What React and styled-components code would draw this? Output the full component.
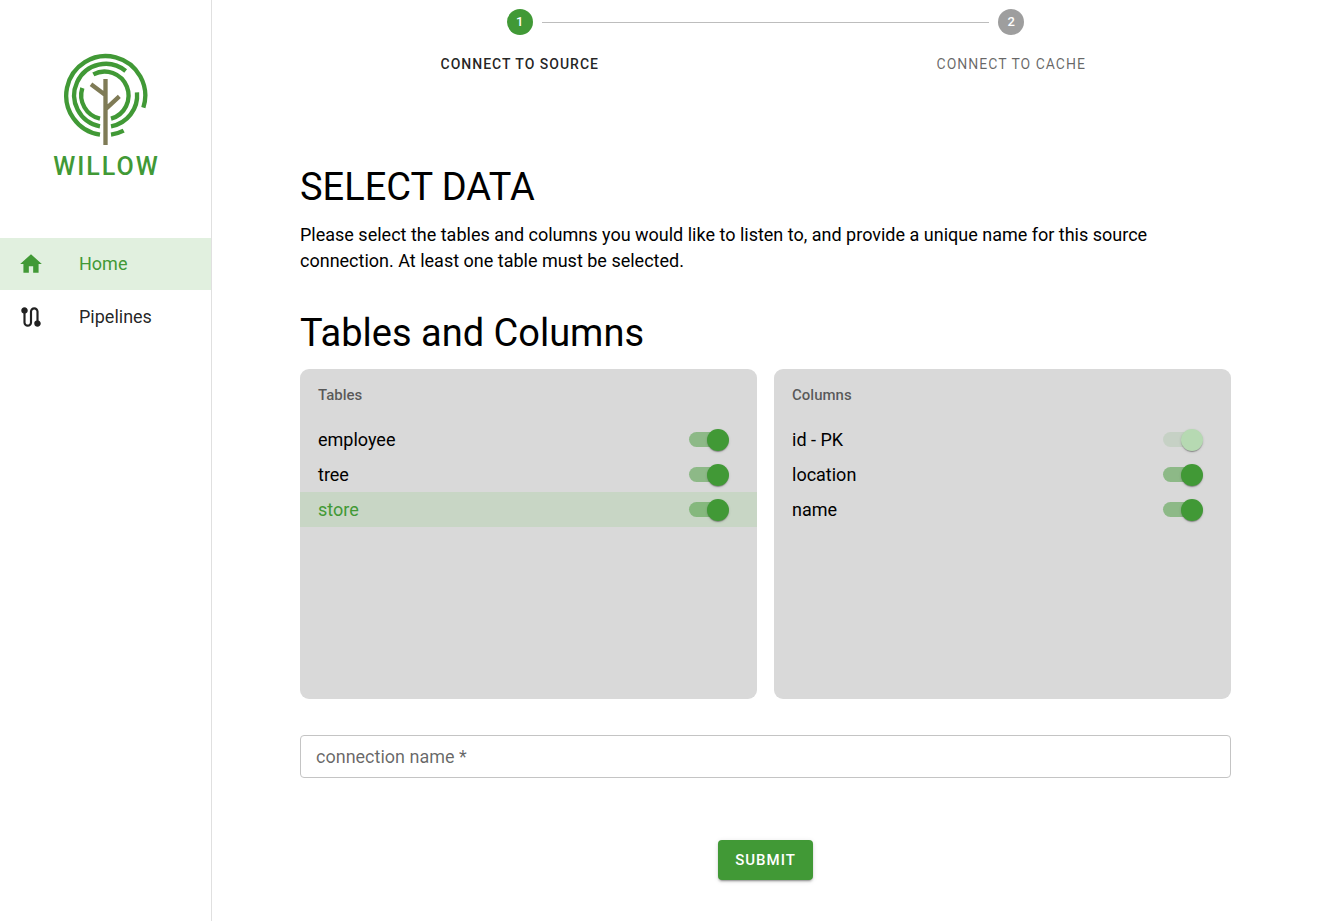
import React, { useState } from "react";
import styled, { createGlobalStyle, css } from "styled-components";

const green = "#419936";

const GlobalStyle = createGlobalStyle`
  *, *::before, *::after { box-sizing: border-box; }
  body {
    margin: 0;
    background: #fff;
    color: #000;
    font-family: Roboto, "Liberation Sans", sans-serif;
    font-size: 18px;
    line-height: 26px;
  }
  h1, h2, h3, p, ul, ol { margin: 0; padding: 0; font-weight: 400; list-style: none; }
`;

const Shell = styled.div`
  display: grid;
  grid-template-columns: 212px minmax(0, 1fr);
  min-height: 100vh;
`;

const Sidebar = styled.aside`
  border-right: 1px solid #e0e0e0;
`;

const Brand = styled.div`
  display: flex;
  flex-direction: column;
  align-items: center;
  height: 238px;
  padding-top: 52px;
`;

const BrandName = styled.span`
  margin-top: 6px;
  padding-left: 2px;
  color: ${green};
  font-size: 25px;
  font-weight: 500;
  line-height: 32px;
  letter-spacing: 2px;
`;

const NavLink = styled.a`
  display: flex;
  align-items: center;
  gap: 35px;
  height: 52px;
  margin-bottom: 1px;
  padding: 0 18px;
  text-decoration: none;
  color: ${(p) => (p.$active ? green : "rgba(0, 0, 0, 0.87)")};
  background: ${(p) => (p.$active ? "#e1f0df" : "transparent")};

  svg { width: 26px; height: 26px; fill: currentColor; }
`;

const Main = styled.main`
  padding-bottom: 40px;
`;

const Stepper = styled.ol`
  display: flex;
  padding: 9px 62px 0;
`;

const Step = styled.li`
  position: relative;
  display: flex;
  flex: 1;
  flex-direction: column;
  align-items: center;
  gap: 16px;
  color: ${(p) => (p.$active ? "rgba(0, 0, 0, 0.87)" : "rgba(0, 0, 0, 0.6)")};
  font-size: 14px;
  font-weight: ${(p) => (p.$active ? 500 : 400)};
  line-height: 26px;
  letter-spacing: 1px;
  text-transform: uppercase;

  &:not(:first-child)::before {
    content: "";
    position: absolute;
    top: 13px;
    left: calc(-50% + 22px);
    right: calc(50% + 22px);
    border-top: 1px solid #bdbdbd;
  }
`;

const StepNumber = styled.span`
  width: 26px;
  height: 26px;
  border-radius: 50%;
  background: ${(p) => (p.$active ? green : "#9e9e9e")};
  color: #fff;
  font-size: 13px;
  font-weight: 500;
  letter-spacing: normal;
  text-align: center;
`;

const Form = styled.form`
  display: flex;
  flex-direction: column;
  padding: 87px 88px 0;
`;

const Heading = styled.h1`
  font-size: 38px;
  line-height: 46px;
`;

const Intro = styled.p`
  margin: 12px 0 36px;
`;

const Panels = styled.div`
  display: grid;
  grid-template-columns: 1fr 1fr;
  gap: 17px;
  margin-top: 13px;
`;

const Panel = styled.section`
  min-height: 330px;
  border-radius: 9px;
  background: #d9d9d9;
`;

const PanelTitle = styled.h3`
  padding: 0 18px;
  color: rgba(0, 0, 0, 0.6);
  font-size: 15px;
  font-weight: 500;
  line-height: 53px;
`;

const Row = styled.li`
  display: flex;
  align-items: center;
  justify-content: space-between;
  height: 35px;
  padding: 0 27px 0 18px;
  ${(p) =>
    p.$selected &&
    css`
      color: ${green};
      background: #c8d6c5;
    `}
`;

const Switch = styled.input`
  appearance: none;
  position: relative;
  display: flex;
  align-items: center;
  width: 41px;
  height: 22px;
  margin: 0;
  cursor: pointer;

  &::before {
    content: "";
    width: 38px;
    height: 15px;
    border-radius: 8px;
    background: #000;
    opacity: 0.38;
  }
  &::after {
    content: "";
    position: absolute;
    left: 0;
    width: 22px;
    height: 22px;
    border-radius: 50%;
    background: #fff;
    box-shadow: 0 2px 1px -1px rgba(0, 0, 0, 0.2), 0 1px 1px rgba(0, 0, 0, 0.14), 0 1px 3px rgba(0, 0, 0, 0.12);
  }
  &:checked::before { background: ${green}; opacity: 0.5; }
  &:checked::after { left: 18px; background: ${green}; }
  &:disabled { cursor: default; }
  &:disabled::before { opacity: 0.12; }
  &:disabled::after { background: #b6d9b2; }
`;

const TextInput = styled.input`
  width: 100%;
  height: 43px;
  margin-top: 36px;
  padding: 0 15px;
  border: 1px solid #c4c4c4;
  border-radius: 4px;
  color: rgba(0, 0, 0, 0.87);
  font: inherit;

  &::placeholder { color: rgba(0, 0, 0, 0.6); opacity: 1; }
  &:focus { border-color: ${green}; outline: none; }
`;

const SubmitButton = styled.button`
  align-self: center;
  height: 40px;
  margin-top: 62px;
  padding: 0 17px;
  border: 0;
  border-radius: 4px;
  background: ${green};
  color: #fff;
  font: 500 15px/26px Roboto, "Liberation Sans", sans-serif;
  letter-spacing: 1px;
  text-transform: uppercase;
  box-shadow: 0 3px 1px -2px rgba(0, 0, 0, 0.2), 0 2px 2px rgba(0, 0, 0, 0.14), 0 1px 5px rgba(0, 0, 0, 0.12);
  cursor: pointer;
`;

function TreeLogo() {
  return (
    <svg width="87" height="93" viewBox="51 21 261 279" fill="none" strokeWidth="13" aria-hidden="true">
      <g stroke={green}>
        <path d="M165 269A118.500 118.500 0 1 1 295 188" />
        <path d="M236 257A118.500 118.500 0 0 1 198 269" />
        <path d="M165 244A94.500 94.500 0 1 1 242 78" />
        <path d="M276 142A94.500 94.500 0 0 1 198 244" />
        <path d="M145 88A72 72 0 1 1 198 221" />
        <path d="M165 221A72 72 0 0 1 112 129" />
      </g>
      <path d="M181.500 102V300M138 118L181 150M223 154L181 193" stroke="#7f7b56" />
    </svg>
  );
}

function HomeIcon() {
  return (
    <svg viewBox="0 0 24 24" aria-hidden="true">
      <path d="M10 20v-6h4v6h5v-8h3L12 3 2 12h3v8z" />
    </svg>
  );
}

function RouteIcon() {
  return (
    <svg viewBox="0 0 24 24" aria-hidden="true">
      <path d="M19 15.180V7c0-2.210-1.790-4-4-4s-4 1.790-4 4v10c0 1.100-.9 2-2 2s-2-.9-2-2V8.820C8.160 8.400 9 7.300 9 6c0-1.660-1.340-3-3-3S3 4.340 3 6c0 1.300.840 2.400 2 2.820V17c0 2.210 1.790 4 4 4s4-1.790 4-4V7c0-1.100.9-2 2-2s2 .9 2 2v8.180A2.996 2.996 0 0 0 18 21c1.660 0 3-1.340 3-3 0-1.300-.840-2.400-2-2.820z" />
    </svg>
  );
}

function SwitchPanel({ title, items, selected }) {
  const [off, setOff] = useState({});
  return (
    <Panel>
      <PanelTitle>{title}</PanelTitle>
      <ul>
        {items.map(({ id, label, locked }) => (
          <Row key={id} $selected={id === selected}>
            <label htmlFor={id}>{label}</label>
            <Switch
              id={id}
              type="checkbox"
              checked={!off[id]}
              disabled={locked}
              onChange={(e) => setOff({ ...off, [id]: !e.target.checked })}
            />
          </Row>
        ))}
      </ul>
    </Panel>
  );
}

const tables = [
  { id: "employee", label: "employee" },
  { id: "tree", label: "tree" },
  { id: "store", label: "store" },
];

const columns = [
  { id: "id", label: "id - PK", locked: true },
  { id: "location", label: "location" },
  { id: "name", label: "name" },
];

export default function App() {
  return (
    <>
      <GlobalStyle />
      <Shell>
        <Sidebar>
          <Brand>
            <TreeLogo />
            <BrandName>WILLOW</BrandName>
          </Brand>
          <nav>
            <NavLink href="#home" $active>
              <HomeIcon />
              Home
            </NavLink>
            <NavLink href="#pipelines">
              <RouteIcon />
              Pipelines
            </NavLink>
          </nav>
        </Sidebar>
        <Main>
          <Stepper>
            <Step $active>
              <StepNumber $active>1</StepNumber>
              Connect to source
            </Step>
            <Step>
              <StepNumber>2</StepNumber>
              Connect to cache
            </Step>
          </Stepper>
          <Form onSubmit={(e) => e.preventDefault()}>
            <Heading>SELECT DATA</Heading>
            <Intro>
              Please select the tables and columns you would like to listen to, and provide a unique name for this
              source connection. At least one table must be selected.
            </Intro>
            <Heading as="h2">Tables and Columns</Heading>
            <Panels>
              <SwitchPanel title="Tables" items={tables} selected="store" />
              <SwitchPanel title="Columns" items={columns} />
            </Panels>
            <TextInput aria-label="connection name" placeholder="connection name *" required />
            <SubmitButton type="submit">Submit</SubmitButton>
          </Form>
        </Main>
      </Shell>
    </>
  );
}
